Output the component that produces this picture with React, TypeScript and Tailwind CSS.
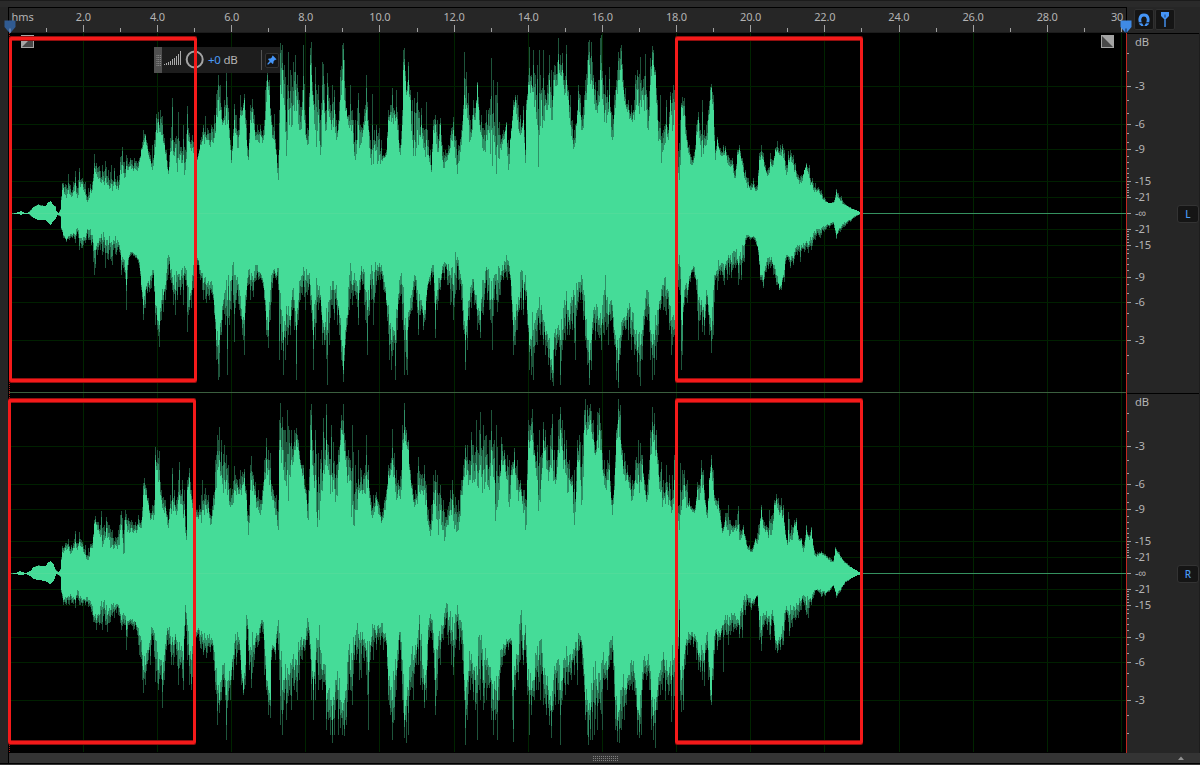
import React from "react";

type Point = [number, number, number];

// Each entry is x:body/peak, in plot pixels.
const LEFT_TOP =
  "10:213/213 15:213/213 18:212/212 21:211/211 24:213/213 27:213/213 30:211/210 33:207/207 38:205/204 42:206/205 45:206/206 48:202/202 50:201/201 53:205/205 55:207/206 56:211/211 58:213/213 60:210/209 61:200/196 62:190/183 63:188/183 65:195/184 68:190/174 70:195/185 73:192/182 75:183/171 77:198/188 79:182/168 82:184/178 85:195/182 88:200/188 90:190/184 92:190/182 94:168/154 96:174/163 99:178/166 102:180/165 105:178/161 108:185/170 111:184/165 114:182/168 117:186/176 119:185/175 120:170/157 122:165/147 124:178/162 126:166/155 130:166/158 134:168/158 138:168/161 141:150/148 143:145/130 145:136/134 147:149/143 150:161/155 152:170/145 154:155/140 156:130/114 158:122/112 160:132/110 162:135/116 164:145/138 166:160/150 168:174/170 170:152/138 172:140/98 175:148/138 178:158/112 180:155/147 183:155/125 185:170/150 187:130/106 189:142/133 192:148/135 194:155/145 197:160/157 200:145/140 203:135/125 205:137/116 208:140/130 211:140/125 214:138/115 216:115/94 218:100/75 220:110/85 222:125/120 224:120/100 226:108/65 228:120/108 230:150/140 231:163/150 234:120/104 236:135/115 238:148/130 240:115/95 242:115/110 244:100/94 246:140/120 248:160/150 250:120/105 252:112/99 254:130/115 257:140/125 260:135/125 263:140/130 265:120/90 267:80/60 269:95/80 271:125/115 274:140/114 276:155/150 278:180/155 279:150/110 280:85/43 282:70/45 284:105/65 287:140/85 288:110/52 290:108/70 293:105/62 295:90/55 297:100/75 299:130/100 302:110/90 303:90/45 305:135/115 308:144/130 310:65/48 311:75/42 313:105/95 315:130/67 318:115/85 320:155/120 322:110/62 323:100/64 326:130/110 327:95/73 330:120/105 332:120/85 334:110/90 336:140/120 338:130/120 340:100/70 342:80/45 343:60/43 344:100/60 346:110/108 348:125/115 350:125/85 352:125/110 355:160/120 358:125/93 360:145/125 363:130/122 366:110/75 368:130/120 370:158/140 372:150/94 374:145/130 376:150/125 379:155/128 381:160/140 383:158/155 386:155/150 388:120/110 390:115/105 392:118/88 394:115/110 396:117/90 398:140/125 400:155/145 402:125/110 403:70/50 404:65/48 406:95/90 408:80/62 410:100/90 412:140/100 414:140/98 417:130/92 419:135/112 421:125/108 424:150/130 426:140/102 428:155/140 430:165/150 431:172/165 433:130/120 435:125/115 437:152/120 440:125/118 442:160/145 445:162/150 448:155/145 451:140/128 453:130/117 456:165/140 458:163/145 461:145/130 463:115/105 464:95/52 466:105/72 468:120/93 470:140/120 473:115/100 475:120/108 477:85/82 479:125/110 481:135/115 484:150/130 486:135/110 488:130/110 491:130/58 493:135/80 497:145/82 500:148/135 503:140/130 506:125/122 508:170/140 510:140/138 513:110/100 515:100/95 517:120/95 520:135/115 523:120/106 525:163/150 526:110/100 528:85/75 529:85/47 531:85/75 533:92/50 535:100/75 537:125/65 539:135/50 541:100/90 543:120/50 545:105/95 547:110/85 549:80/55 551:120/70 554:80/65 557:85/62 558:60/38 560:75/55 562:70/53 564:95/80 566:80/45 568:100/90 570:125/95 572:140/120 574:147/130 577:115/110 578:100/85 580:115/95 582:130/115 585:100/80 587:85/60 588:60/42 589:65/40 591:80/42 593:85/75 595:110/82 598:105/80 600:70/38 601:80/35 603:105/85 605:110/75 607:115/90 609:95/67 612:140/115 614:115/95 616:90/80 618:80/52 620:70/48 621:65/45 623:90/80 625:105/88 628:110/100 631:120/105 633:115/110 635:110/75 637:90/70 640:100/57 642:95/88 645:95/54 648:130/110 650:85/58 652:60/46 653:65/50 655:75/70 657:120/100 660:140/95 663:150/130 666:125/100 668:140/130 670:100/92 673:125/85 674:110/90 677:165/130 680:165/120 681:107/103 682:108/97 684:115/98 686:140/130 689:155/145 691:165/157 694:158/152 696:135/125 698:120/112 700:145/130 702:140/100 704:145/130 706:145/125 708:120/110 710:100/87 711:88/84 713:110/95 715:160/150 717:140/137 720:155/148 723:155/145 725:150/146 728:165/155 732:165/158 735:178/170 737:155/150 739:150/145 742:165/158 745:180/170 748:185/178 750:190/185 753:185/178 757:190/185 759:160/153 761:155/145 763:160/153 765:170/165 768:175/168 770:162/153 773:165/160 775:150/148 777:150/141 780:155/145 782:150/144 784:160/150 786:175/165 788:160/151 790:157/150 793:165/155 795:170/163 798:180/175 801:183/175 804:170/170 806:165/163 809:178/165 812:185/178 815:190/183 818:190/187 821:195/190 824:200/197 828:203/203 831:203/203 834:202/200 836:192/189 838:198/193 841:201/196 845:205/204 850:208/207 855:210/210 860:212/212";

const LEFT_BOTTOM =
  "10:213/213 15:213/213 21:215/215 24:213/213 27:213/213 30:215/216 33:218/218 38:220/220 45:220/220 48:223/223 50:225/225 53:221/221 55:219/219 57:215/215 60:216/217 61:228/230 63:235/238 66:240/242 69:236/240 72:235/238 75:235/243 77:228/232 79:238/250 82:240/248 85:238/243 88:230/240 91:235/245 93:243/262 94:250/275 95:250/268 98:243/250 102:240/255 105:245/268 108:245/260 112:245/265 116:243/255 119:245/252 121:260/275 124:260/272 126:285/310 128:258/265 131:252/255 135:255/258 139:262/268 141:285/290 143:305/320 145:290/308 147:283/293 149:285/292 151:275/288 153:270/275 155:305/325 157:320/330 159:325/347 161:300/320 163:295/312 165:285/300 168:255/275 170:270/280 173:285/305 175:290/315 177:275/300 180:280/295 183:275/305 185:268/280 187:285/332 189:300/310 191:290/308 194:265/290 197:258/265 200:270/280 203:283/300 206:285/303 209:285/300 212:285/295 214:305/315 216:340/360 218:345/380 219:340/377 221:320/335 223:300/310 225:290/325 227:300/375 229:300/325 231:280/310 232:265/280 234:275/342 236:280/300 239:290/310 242:320/335 244:320/355 246:290/300 248:270/285 250:280/300 253:280/297 256:265/280 258:272/280 261:275/280 264:290/300 266:320/335 268:330/348 270:290/320 273:270/278 276:275/280 278:268/290 279:290/360 281:310/350 283:340/375 285:325/360 287:315/345 290:320/335 292:290/310 294:300/330 296:330/380 298:300/320 300:280/300 302:275/295 305:280/310 307:275/295 310:285/305 312:310/330 313:335/370 315:300/340 318:290/310 320:295/300 322:320/345 324:330/345 327:330/385 329:300/345 331:290/305 334:290/320 337:300/325 339:315/335 341:340/360 343:370/382 345:330/345 347:315/325 349:275/310 352:285/305 355:280/295 358:300/325 360:275/290 362:272/285 365:290/320 367:310/355 369:300/315 371:265/300 373:285/325 376:270/285 380:267/280 383:275/290 386:300/305 389:325/360 391:340/370 393:330/350 395:340/380 397:310/330 399:280/300 402:285/320 404:325/375 406:340/370 407:330/375 409:310/320 412:290/310 414:275/290 416:280/300 418:310/335 420:300/315 423:315/330 425:310/320 427:285/290 430:275/285 433:265/275 435:310/338 437:290/310 440:280/290 444:262/280 447:270/285 450:275/305 453:285/320 456:260/290 459:270/290 461:280/300 463:310/330 465:340/370 467:320/350 469:300/320 471:285/308 474:290/305 477:310/330 480:320/338 483:280/315 484:283/300 487:270/300 490:300/320 492:300/350 494:275/300 497:280/312 500:275/295 503:270/280 507:260/280 510:275/280 513:325/355 515:320/345 517:310/330 519:300/310 521:270/310 523:300/315 525:275/300 527:310/325 529:345/370 531:340/375 533:330/380 535:320/345 537:310/345 540:310/335 543:320/345 545:335/355 548:340/365 550:360/380 552:370/382 553:350/386 556:335/350 558:325/340 560:340/385 562:330/350 565:305/340 567:310/335 569:320/335 572:300/330 575:305/360 577:290/310 580:282/300 583:290/320 585:320/340 587:340/365 589:360/385 591:340/370 593:310/330 595:310/340 598:320/335 601:325/350 604:290/335 606:300/330 608:315/345 611:300/320 614:330/345 616:350/380 618:360/388 620:335/355 622:320/335 625:320/330 628:310/340 631:320/350 634:330/355 637:350/375 640:345/386 642:330/360 644:310/325 647:290/320 650:330/360 652:345/380 654:340/375 656:325/360 658:310/335 660:300/310 663:285/310 666:290/315 669:305/330 671:320/355 674:320/335 676:300/325 679:255/290 681:320/370 682:325/355 684:290/305 687:290/303 690:275/282 693:266/272 696:280/290 698:300/340 700:305/320 702:310/332 704:320/335 706:290/305 709:315/335 711:330/353 713:290/335 715:275/280 717:270/290 720:265/275 724:270/285 727:260/280 731:262/278 735:252/268 738:265/285 741:260/280 744:245/262 746:235/240 750:237/240 755:238/242 758:250/255 760:275/280 763:280/288 766:262/272 770:260/268 773:265/275 776:275/285 779:288/290 781:285/290 784:270/282 786:255/260 790:260/268 793:258/265 797:245/255 800:250/262 804:245/252 808:245/253 811:240/250 815:233/240 820:230/238 824:227/232 829:225/228 833:222/224 836:235/239 840:228/232 845:223/226 850:220/222 855:216/217 860:214/214";

const RIGHT_TOP =
  "10:573/573 15:573/573 20:571/571 22:572/572 25:573/573 30:571/571 33:567/567 38:566/565 45:566/566 48:562/562 50:561/561 53:564/564 55:570/569 58:572/572 60:570/569 61:560/557 62:552/546 65:548/543 68:547/539 71:553/545 73:548/543 75:542/531 77:550/543 79:542/532 82:547/542 85:555/545 88:560/548 90:548/544 92:548/543 94:524/520 95:522/516 98:530/522 100:537/525 101:535/511 104:540/525 106:528/517 109:540/525 112:545/530 115:545/537 118:545/530 120:530/515 121:525/511 124:553/520 125:520/510 128:530/518 131:528/520 135:530/522 138:525/515 141:528/520 143:495/483 144:489/478 146:495/488 148:505/498 150:520/513 152:515/505 154:515/500 155:460/447 157:470/450 159:480/451 161:500/490 163:510/497 165:508/500 168:528/520 170:508/495 172:500/468 174:505/490 176:515/500 178:500/480 179:495/462 182:505/480 184:510/490 186:540/530 187:490/480 189:478/468 191:500/490 193:510/500 196:517/510 199:515/505 202:510/480 205:505/488 208:508/495 210:525/515 213:510/495 215:490/460 217:470/435 219:460/427 221:475/440 224:480/445 226:480/455 228:490/465 231:505/495 234:490/466 237:488/480 240:490/470 242:485/472 244:478/469 246:500/490 248:535/515 250:490/465 251:480/456 253:485/475 255:495/482 258:510/490 261:510/500 264:480/460 266:460/438 268:470/450 270:480/453 273:500/490 276:515/495 278:530/500 279:450/420 280:440/403 282:450/417 284:480/430 287:470/410 289:475/430 291:460/430 294:450/430 296:440/428 298:450/440 300:465/460 303:475/465 306:500/490 308:520/490 310:450/410 311:430/404 313:475/450 315:475/430 318:510/453 321:490/450 323:470/418 325:465/450 326:440/404 328:470/445 331:475/425 333:480/442 336:495/465 338:470/450 341:430/415 343:435/404 345:460/440 348:475/450 350:480/460 352:505/425 355:510/465 358:490/450 361:490/470 363:490/475 366:475/435 368:480/465 370:505/495 373:515/495 376:500/492 379:515/505 382:520/512 384:510/500 386:500/490 388:475/465 390:475/463 392:460/429 394:475/453 396:500/470 398:490/480 401:490/470 402:450/425 404:430/403 406:445/430 408:450/440 410:480/470 412:495/485 415:505/490 418:485/457 421:490/475 424:490/465 426:500/485 428:525/510 431:530/505 433:500/475 435:490/470 437:520/475 440:510/485 443:530/500 447:525/510 450:510/490 452:500/480 455:525/497 458:530/500 461:495/480 463:480/465 465:460/445 467:470/445 469:480/460 471:465/432 473:480/445 476:465/420 479:470/430 480:465/412 483:470/425 486:465/435 489:490/440 491:450/410 494:480/440 496:510/425 499:490/465 501:460/437 504:460/450 507:480/455 509:507/460 511:475/465 514:460/448 517:490/460 520:490/480 524:510/490 526:525/500 527:480/460 528:440/420 531:435/418 532:440/409 534:455/450 537:480/445 539:500/430 541:480/455 543:440/422 545:450/430 547:470/445 550:465/435 552:450/414 554:480/450 556:480/460 558:450/420 560:430/407 562:450/420 564:460/430 566:475/440 569:480/460 572:485/475 574:525/470 577:460/440 579:460/435 582:500/445 584:430/410 585:425/399 587:430/405 589:425/408 590:420/404 593:440/420 595:455/450 597:440/412 599:430/408 601:450/430 604:485/460 607:480/460 609:470/450 612:515/500 614:490/475 616:440/430 618:420/399 620:440/405 622:460/450 624:475/453 627:475/465 630:490/475 632:500/480 635:480/460 638:475/440 640:480/443 642:465/455 645:495/485 647:500/485 650:455/430 652:430/407 654:440/413 656:450/430 658:475/460 661:490/462 663:500/480 666:490/465 669:500/475 672:510/475 674:480/455 676:490/460 679:530/505 680:515/463 682:500/470 684:485/470 687:505/480 689:505/498 692:512/508 695:510/505 697:490/482 699:500/485 701:475/460 703:485/470 705:505/500 707:518/510 709:480/478 711:465/455 713:490/470 715:505/498 718:505/498 720:520/510 722:533/528 725:520/513 728:530/505 731:530/525 735:528/520 738:525/506 740:540/530 743:530/525 746:545/540 749:550/545 752:552/548 755:540/538 758:540/525 761:510/505 763:528/520 766:530/525 769:530/510 772:530/515 774:505/500 776:500/494 778:510/498 781:510/498 783:515/505 785:535/530 787:545/540 788:530/512 791:540/525 794:525/520 796:522/518 798:540/535 801:540/538 803:552/545 806:530/525 809:540/535 811:530/527 814:555/550 817:555/552 821:553/551 825:556/554 829:560/557 833:562/560 835:549/547 839:555/552 843:561/560 847:565/563 852:568/568 857:571/571 860:573/573";

const RIGHT_BOTTOM =
  "10:573/573 15:574/574 21:575/575 25:574/574 30:576/576 33:579/579 38:580/580 45:581/581 48:583/583 50:584/584 53:581/581 56:574/574 60:576/577 61:590/593 63:600/605 66:598/605 69:597/605 72:598/603 75:600/608 77:590/598 79:598/605 82:600/606 85:600/605 88:600/607 91:604/612 93:615/622 96:620/630 99:615/625 102:607/630 105:610/625 107:615/632 110:610/622 114:607/618 118:605/615 121:620/630 124:615/625 126:630/650 129:620/625 133:622/630 136:625/630 139:635/655 142:655/680 143:670/693 145:665/685 148:650/660 150:640/665 153:630/640 155:640/682 158:670/690 160:660/675 162:680/708 164:655/680 166:635/650 168:630/645 171:645/665 173:645/665 176:640/655 178:650/685 180:650/665 183:660/690 185:605/625 187:625/660 189:655/685 191:660/690 194:645/660 197:630/635 200:635/648 203:640/655 206:640/658 210:640/652 213:645/660 215:670/690 217:690/725 219:700/713 221:680/700 223:665/680 225:680/700 226:695/740 228:680/700 230:680/700 233:655/680 236:640/665 239:640/650 241:670/685 243:690/695 245:665/685 246:615/640 249:650/670 251:650/688 254:645/660 258:635/645 262:620/632 264:640/675 266:680/690 268:690/715 270:700/718 271:650/660 272:645/650 275:650/660 278:620/650 280:660/725 282:690/735 284:680/700 286:680/720 289:675/690 291:665/710 294:670/690 297:665/700 299:650/680 302:645/660 305:640/650 307:618/640 309:630/645 311:660/700 313:690/720 315:660/700 318:640/690 320:650/680 322:670/690 325:665/685 326:700/730 328:690/720 330:700/735 332:720/743 334:700/735 336:680/700 338:690/735 340:700/728 342:710/735 344:700/736 346:690/725 348:650/690 350:670/690 352:660/705 354:645/660 356:630/660 359:640/680 361:640/678 363:640/658 366:650/675 368:670/730 370:645/660 373:628/660 376:635/650 380:627/645 383:633/650 386:640/645 388:680/700 390:690/715 392:700/740 394:680/720 396:670/690 398:640/660 400:632/650 402:660/700 404:720/738 406:700/743 408:690/735 410:665/690 413:660/700 416:650/665 418:630/665 420:640/685 422:665/690 424:685/708 426:670/700 428:625/640 432:620/640 434:650/680 435:680/715 437:650/690 440:640/665 443:625/640 445:608/625 448:620/645 451:630/665 453:640/675 456:615/640 459:620/650 462:630/660 464:680/700 465:700/745 467:680/720 470:660/690 473:670/700 475:680/710 477:675/740 479:635/690 480:640/700 483:680/710 486:660/700 488:665/685 491:680/720 493:700/735 495:690/720 497:700/740 499:670/700 502:650/665 505:645/655 508:640/650 511:640/645 512:680/720 513:690/742 515:670/690 518:655/680 520:615/660 523:650/665 525:625/650 527:680/695 529:690/735 531:690/715 534:680/700 536:655/690 538:660/690 540:640/700 543:675/705 546:685/715 549:700/725 551:710/738 553:680/710 555:670/705 557:660/690 560:690/745 562:680/700 565:660/695 568:665/685 571:660/680 574:650/675 577:650/685 579:635/650 582:645/665 585:700/720 587:700/735 588:710/745 590:710/740 592:690/740 594:680/735 597:690/730 600:680/710 602:660/730 604:665/680 607:670/690 610:640/660 613:650/670 615:700/730 617:720/742 619:710/743 621:690/730 624:690/720 626:690/705 629:675/690 632:665/690 635:680/695 637:710/735 639:715/738 641:690/735 643:660/680 646:665/680 649:665/690 651:700/730 653:715/740 655:710/748 657:690/710 660:670/695 662:660/690 665:670/700 668:675/695 671:680/722 673:660/710 675:690/710 677:680/700 679:600/620 680:670/700 681:680/712 683:670/710 685:645/665 687:640/655 690:635/645 693:637/647 696:640/660 698:655/670 700:660/672 702:650/680 704:660/686 706:635/650 708:650/680 710:690/700 711:695/705 713:650/680 715:630/640 717:635/650 720:635/640 722:625/630 723:625/672 724:620/635 726:620/635 728:625/645 730:620/635 733:615/632 736:620/630 739:625/638 742:612/638 745:600/615 748:598/605 751:603/610 754:600/604 757:595/597 759:620/640 761:630/651 764:615/625 767:618/630 770:625/640 772:610/620 775:640/650 777:645/653 780:640/650 783:630/645 785:610/620 787:610/615 789:615/636 792:610/627 795:610/620 798:605/618 801:600/610 803:595/602 806:605/615 808:600/618 811:600/605 814:590/595 818:590/592 821:592/597 825:593/596 829:590/592 833:585/586 836:595/598 840:590/592 844:583/585 848:580/581 853:577/577 858:575/575 861:574/574";

const parse = (s: string): Point[] =>
  s.split(" ").map((e) => {
    const [x, rest] = e.split(":");
    const [a, b] = rest.split("/");
    return [Number(x), Number(a), Number(b)];
  });

const noise = (n: number) => {
  const v = Math.sin(n * 12.9898) * 43758.5453;
  return v - Math.floor(v);
};

// Builds three pixel-column paths: body, mid shade and peak shade.
function columns(data: string, center: number, seed: number) {
  const pts = parse(data);
  let body = "";
  let mid = "";
  let peak = "";
  let k = 0;
  for (let x = 10; x <= 860; x++) {
    while (k < pts.length - 2 && pts[k + 1][0] <= x) k++;
    const [x0, b0, p0] = pts[k];
    const [x1, b1, p1] = pts[k + 1];
    const t = Math.min(1, Math.max(0, (x - x0) / (x1 - x0)));
    let b = b0 + (b1 - b0) * t;
    let p = p0 + (p1 - p0) * t;
    const gap = p - b;
    if (t !== 0) {
      // Columns between two listed ones fall back towards the body, some of them deeply.
      const n = noise(x + seed);
      p = b + gap * (0.1 + 0.8 * n);
      b = b + gap * (0.5 * noise(x * 3 + seed) - 0.55);
    }
    const m = b + (p - b) * (0.25 + 0.55 * noise(x * 7 + seed));
    const r = (v: number) => Math.round(v);
    body += `M${x} ${center}V${r(b)}h1V${center}z`;
    mid += `M${x} ${center}V${r(m)}h1V${center}z`;
    peak += `M${x} ${center}V${r(p)}h1V${center}z`;
  }
  return { body, mid, peak };
}

const HALVES = [
  columns(LEFT_TOP, 213, 11),
  columns(LEFT_BOTTOM, 213, 97),
  columns(RIGHT_TOP, 573, 211),
  columns(RIGHT_BOTTOM, 573, 307),
];

const MAJOR: [number, string][] = [
  [127.5, "-3"],
  [89.5, "-6"],
  [64, "-9"],
  [32, "-15"],
  [16.5, "-21"],
];
const MINOR = [160, 142.5, 113, 100.5, 80.5, 71, 57, 51, 45, 40, 36, 29, 26, 23.5, 21, 18.5];
const CENTERS = [213, 573];
const STEP = 74.15;
const SECONDS = Array.from({ length: 15 }, (_, i) => (i + 1) * 2);

function Waveform() {
  return (
    <svg width="1117" height="720" viewBox="9 33 1117 720" className="block shrink-0" shapeRendering="crispEdges">
      <rect x="9" y="33" width="1117" height="720" fill="#000" />
      {SECONDS.map((s) => (
        <rect key={s} x={Math.round(8.7 + (s / 2) * STEP)} y="33" width="1" height="719" fill="#002400" />
      ))}
      {CENTERS.map((c) =>
        MAJOR.map(([o]) => (
          <g key={c + o} fill="#002000">
            <rect x="9" y={Math.round(c - o)} width="1117" height="1" />
            <rect x="9" y={Math.round(c + o - 0.5)} width="1117" height="1" />
          </g>
        )),
      )}
      <rect x="9" y="213" width="1117" height="1" fill="#35905f" />
      <rect x="9" y="573" width="1117" height="1" fill="#35905f" />
      <rect x="9" y="392" width="1117" height="1" fill="#3b5f3f" />
      {HALVES.map((h, i) => (
        <g key={i}>
          <path d={h.peak} fill="#1e543b" />
          <path d={h.mid} fill="#2f8f66" />
          <path d={h.body} fill="#45dc98" />
        </g>
      ))}
      <rect x="14" y="213" width="846" height="1" fill="#50dc9a" />
      <rect x="14" y="573" width="846" height="1" fill="#50dc9a" />
      <path d="M9.5 33V753" stroke="#a11b16" strokeDasharray="1 1" />
    </svg>
  );
}

function Scale({ channel, top }: { channel: string; top: number }) {
  const c = channel === "L" ? 213 : 573;
  return (
    <div className="relative flex-1 border-t border-black">
      <svg width="72" height="358" viewBox={`1127 ${top} 72 358`} className="block">
        <g fill="#b4b4b4" fontFamily="'Noto Sans', sans-serif" fontSize="11.2" letterSpacing="-0.1">
          <text x="1135" y={c - 167.5}>dB</text>
          {MAJOR.map(([o, label]) => (
            <g key={label}>
              <text x="1135" y={c - o + 4}>{label}</text>
              <text x="1135" y={c + o + 3.5}>{label}</text>
            </g>
          ))}
          <text x="1135" y={c + 3.8}>-∞</text>
        </g>
        <g fill="#9a9a9a" shapeRendering="crispEdges">
          <rect x="1127" y={c} width="4" height="1" />
          {MAJOR.map(([o]) => (
            <g key={o}>
              <rect x="1127" y={Math.round(c - o)} width="4" height="1" />
              <rect x="1127" y={Math.round(c + o - 0.5)} width="4" height="1" />
            </g>
          ))}
          {MINOR.map((o) => (
            <g key={o}>
              <rect x="1127" y={Math.round(c - o)} width="2" height="1" />
              <rect x="1127" y={Math.round(c + o - 0.5)} width="2" height="1" />
            </g>
          ))}
        </g>
      </svg>
      <div className="absolute left-[50px] top-[171px] flex h-[18px] w-[22px] items-center justify-center rounded-[3px] border border-[#333] bg-[#151515] text-[10px] font-medium leading-none text-[#4b9cf5]">
        {channel}
      </div>
    </div>
  );
}

function Ruler() {
  return (
    <div className="relative h-[26px] w-[1118px] shrink-0 overflow-hidden border-r border-t border-black bg-[#262626]">
      <div className="ml-[37px] flex w-[1200px] pt-px text-[11px] leading-[15px] tracking-[-0.2px] text-[#b4b4b4]">
        {SECONDS.map((s) =>
          s === 30 ? (
            <span key={s} className="w-[74.15px] shrink-0 pl-[27px]">
              30
            </span>
          ) : (
            <span key={s} className="w-[74.15px] shrink-0 pl-[0.5px] text-center">
              {s.toFixed(1)}
            </span>
          ),
        )}
      </div>
      <span className="absolute left-[2.5px] top-px text-[11px] leading-[15px] tracking-[-0.1px] text-[#b4b4b4]">hms</span>
      <svg width="1117" height="25" viewBox="9 8 1117 25" className="absolute left-0 top-0" shapeRendering="crispEdges">
        {Array.from({ length: 31 }, (_, i) => {
          const x = Math.round(8.7 + (i * STEP) / 2);
          const major = i % 2 === 0;
          return <rect key={i} x={x} y={major ? 25 : 28} width="1" height={major ? 7 : 4} fill="#a0a0a0" />;
        })}
        <rect x="9" y="32" width="1117" height="1" fill="#1c1c1c" />
      </svg>
    </div>
  );
}

const BOX =
  "absolute rounded-[2px] border-[3px] border-[#f41a1a] shadow-[0_1px_0_#920f0f,0_-1px_0_#920f0f,inset_0_1px_0_#920f0f,inset_0_-1px_0_#920f0f]";

function Hud() {
  return (
    <div className="absolute left-[154px] top-[47px] flex h-[26px] w-[126px] items-center bg-[#1f1f1f]/95">
      <div className="flex h-full w-[8px] shrink-0 items-center justify-center bg-[#505050]">
        <svg width="5" height="11" viewBox="0 0 5 11">
          <path d="M0.5 .5H5M.5 2.5H5M.5 4.5H5M.5 6.5H5M.5 8.5H5M.5 10.5H5" stroke="#8d8d8d" strokeDasharray="1 .7" />
        </svg>
      </div>
      <svg width="19" height="26" viewBox="0 0 19 26" className="shrink-0" shapeRendering="crispEdges">
        {[1, 2, 3, 4, 6, 7, 9, 11, 14].map((h, i) => (
          <rect key={i} x={2 + i * 2} y={18 - h} width="1" height={h} fill="#ababab" />
        ))}
      </svg>
      <svg width="24" height="26" viewBox="0 0 24 26" className="shrink-0">
        <circle cx="13.7" cy="12.5" r="8" fill="none" stroke="#a4a4a4" strokeWidth="2" />
      </svg>
      <span className="ml-[3px] flex w-[50px] shrink-0 gap-[3px] text-[11.5px] leading-none tracking-[-0.3px] text-[#b4b4b4]">
        <span className="text-[#4b9cf5]">+0</span>
        <span>dB</span>
      </span>
      <span className="ml-[3px] h-[20px] w-px shrink-0 bg-[#555]" />
      <span className="ml-[3px] flex h-[15px] w-[14px] shrink-0 items-center justify-center rounded-[2px] border border-[#333] bg-[#141414]">
        <svg width="10" height="10" viewBox="0 0 10 10" className="shrink-0">
          <path d="M5 1.3 5.8.5 9.5 4.2 8.7 5 8 4.8 6.5 6.5 6.4 8.3 5.6 8.9 3.9 7.2 1.3 9.6.4 9.6.4 8.7 2.8 6.1 1.1 4.4 1.7 3.6 3.5 3.5 5.2 2z" fill="#4595f7" />
        </svg>
      </span>
    </div>
  );
}

function Marker({ className, fill }: { className: string; fill: string }) {
  return (
    <svg width="12" height="13" viewBox="0 0 12 13" className={`absolute ${className}`}>
      <path d="M.5.5H11.5V7L6.8 12.5H5.2L.5 7z" fill={fill} />
      <path d="M6 8.5V13" stroke={fill === "#3f8ae6" ? "#10233c" : "#8ba8cc"} />
    </svg>
  );
}

export default function App() {
  return (
    <div className="relative flex h-[765px] w-[1200px] flex-col overflow-hidden bg-[#262626] font-['Noto_Sans',sans-serif]">
      <div className="h-[7px] border-t border-[#1b1b1b] bg-[#2a2a2a]" />
      <div className="flex h-[26px]">
        <div className="w-[9px] shrink-0 border-r border-black" />
        <Ruler />
        <div className="flex gap-px pl-[7px] pt-[2px]">
          <div className="flex h-[21px] w-[20px] items-center justify-center rounded-[2px] border border-[#303030] bg-[#151515]">
            <svg width="12" height="13" viewBox="0 0 12 13">
              <path d="M2.8 11.5H3.2C1 7.8 1.2 2 6 2s5 5.8 2.8 9.5h.4" fill="none" stroke="#4595f7" strokeWidth="2.8" />
              <path d="M.5 9.8h11" stroke="#151515" strokeWidth="1" />
            </svg>
          </div>
          <div className="flex h-[21px] w-[20px] items-center justify-center rounded-[2px] border border-[#303030] bg-[#151515]">
            <svg width="8" height="15" viewBox="0 0 8 15">
              <path d="M0 0H8V4L5 7H3L0 4z" fill="#4595f7" />
              <path d="M4 3V15" stroke="#4595f7" strokeWidth="1.4" />
              <path d="M4 2.5v3" stroke="#203e68" />
            </svg>
          </div>
        </div>
      </div>
      <div className="flex h-[720px]">
        <div className="w-[9px] shrink-0 border-r border-black" />
        <Waveform />
        <div className="w-px shrink-0 bg-[#c0281f]" />
        <div className="flex min-w-0 flex-1 flex-col border-r border-[#1d1d1d]">
          <Scale channel="L" top={34} />
          <Scale channel="R" top={394} />
        </div>
      </div>
      <div className="flex h-[10px]">
        <div className="w-[9px] border-r border-black" />
        <div className="flex flex-1 items-center bg-[#343434] pl-[584px]">
          <svg width="25" height="5" viewBox="0 0 25 5" shapeRendering="crispEdges">
            <path d="M0 .5H25M0 2.5H25M0 4.5H25" stroke="#818181" strokeDasharray="1 1" />
          </svg>
          <svg width="8" height="4" viewBox="0 0 8 4" className="ml-auto mr-[15px]">
            <path d="M1 4 4 .5 7 4z" fill="#929292" />
          </svg>
        </div>
      </div>
      <div className="h-[2px] border-t border-black bg-[#333]" />

      <svg width="13" height="13" viewBox="0 0 13 13" className="absolute left-[21px] top-[35px]">
        <rect x=".5" y=".5" width="12" height="12" fill="#484848" stroke="#a4a4a4" />
        <path d="M1 1H12L1 12z" fill="#a4a4a4" />
      </svg>
      <svg width="13" height="13" viewBox="0 0 13 13" className="absolute left-[1101px] top-[35px]">
        <rect x=".5" y=".5" width="12" height="12" fill="#484848" stroke="#a4a4a4" />
        <path d="M1 1H12V12z" fill="#a4a4a4" />
      </svg>
      <Hud />
      <Marker className="left-[4px] top-[20px]" fill="#305b92" />
      <Marker className="left-[1120px] top-[20px]" fill="#3f8ae6" />
      <div className={`${BOX} left-[9px] top-[37px] h-[345px] w-[188px]`} />
      <div className={`${BOX} left-[675px] top-[37px] h-[345px] w-[188px]`} />
      <div className={`${BOX} left-[8px] top-[399px] h-[345px] w-[188px]`} />
      <div className={`${BOX} left-[675px] top-[399px] h-[345px] w-[188px]`} />
    </div>
  );
}
